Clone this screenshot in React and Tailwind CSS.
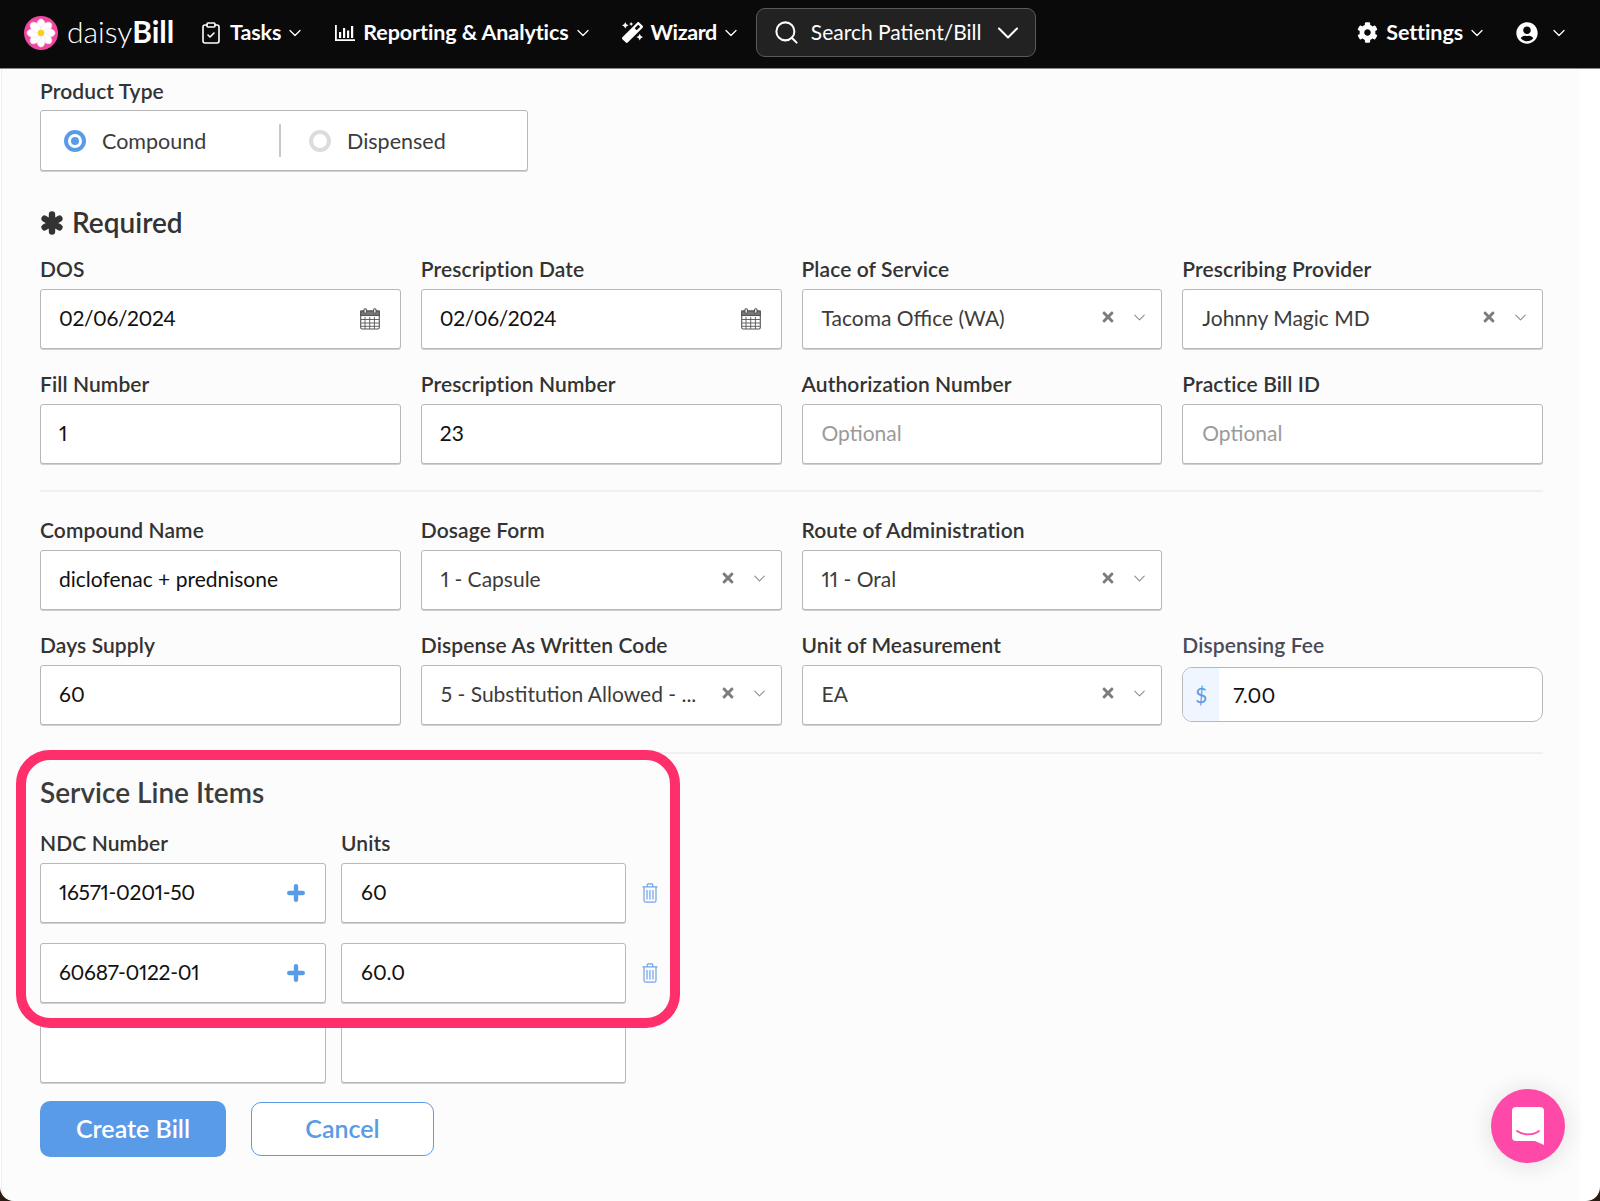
import React from "react";
import { ChevronDown, ClipboardCheck, Search } from "lucide-react";
import { FaCog, FaMagic, FaTimes, FaUserCircle } from "react-icons/fa";

function Logo() {
  const petals = [0, 45, 90, 135, 180, 225, 270, 315];
  return (
    <svg width="34" height="34" viewBox="0 0 34 34" className="shrink-0">
      <circle cx="17" cy="17" r="17" fill="#f0479f" />
      {petals.map((a) => (
        <ellipse key={a} cx="17" cy="9.5" rx="4.2" ry="6.6" fill="#ffffff" stroke="#fbd7e8" strokeWidth="0.6" transform={`rotate(${a} 17 17)`} />
      ))}
      <circle cx="17" cy="17" r="3.2" fill="#f7d21c" />
    </svg>
  );
}

function ChartIcon() {
  return (
    <svg width="20" height="18" viewBox="0 0 20 18" fill="#fff" className="shrink-0">
      <path d="M0 1h1.8v14.2H20V17H0z" />
      <rect x="4" y="8" width="2.2" height="6" />
      <rect x="8" y="4" width="2.2" height="10" />
      <rect x="12" y="6.5" width="2.2" height="7.5" />
      <rect x="16" y="2" width="2.2" height="12" />
    </svg>
  );
}

function CalendarIcon() {
  return (
    <svg width="20" height="22" viewBox="0 0 20 22" fill="none" stroke="#555" strokeWidth="1.1" className="shrink-0 mt-[2px]">
      <rect x="0.7" y="3" width="18.6" height="18" rx="1.5" />
      <rect x="0.7" y="3" width="18.6" height="4.5" fill="#777" />
      <path d="M5 9v12M9.7 9v12M14.4 9v12M1 11.5h18M1 15h18M1 18.3h18" strokeWidth="0.9" />
      <rect x="4" y="0.7" width="2.4" height="4.6" rx="1" fill="#fff" />
      <rect x="13.6" y="0.7" width="2.4" height="4.6" rx="1" fill="#fff" />
    </svg>
  );
}

function TrashIcon() {
  return (
    <svg width="16" height="20" viewBox="0 0 16 20" fill="none" stroke="#6ea3ea" strokeWidth="1.2" className="shrink-0">
      <path d="M0.5 3.8h15M5.2 3.6V1.9c0-.6.4-1 1-1h3.6c.6 0 1 .4 1 1v1.7" />
      <path d="M2 4v13.6c0 .9.6 1.5 1.5 1.5h9c.9 0 1.5-.6 1.5-1.5V4" />
      <path d="M5 7v9.5M8 7v9.5M11 7v9.5" />
    </svg>
  );
}

function PlusIcon() {
  return (
    <svg width="18" height="18" viewBox="0 0 18 18" stroke="#5a9be8" strokeWidth="4.4" strokeLinecap="round" className="shrink-0 mt-[2px]">
      <path d="M9 2.2v13.6M2.2 9h13.6" />
    </svg>
  );
}

function AsteriskIcon() {
  return (
    <svg width="24" height="24" viewBox="0 0 24 24" stroke="#333333" strokeWidth="6.4" strokeLinecap="round" className="shrink-0">
      <path d="M12 3.5v17M4.6 7.7l14.8 8.6M19.4 7.7L4.6 16.3" />
    </svg>
  );
}

function ChatIcon() {
  return (
    <svg width="32" height="38" viewBox="0 0 32 38" className="shrink-0">
      <path d="M4 0h24a4 4 0 0 1 4 4v34l-9-4H4a4 4 0 0 1-4-4V4a4 4 0 0 1 4-4z" fill="#fff" />
      <path d="M5 24c6 4.5 16 4.5 22 0" fill="none" stroke="#ff49a8" strokeWidth="1.8" strokeLinecap="round" />
    </svg>
  );
}

function NavItem({ icon, label, className = "", textClass = "tracking-[-0.1px]" }) {
  return (
    <div className={`flex items-center shrink-0 ${className}`}>
      {icon}
      <span className={`ml-[8px] pb-[1px] text-[21.5px] leading-[28px] font-bold text-white whitespace-nowrap ${textClass}`}>{label}</span>
      <ChevronDown size={20} strokeWidth={1.5} color="#fff" className="ml-[4px]" />
    </div>
  );
}

function Label({ children, className = "text-[#333333]" }) {
  return <div className={`h-[24px] mb-[8px] text-[21px] tracking-[0.1px] leading-[23px] font-semibold ${className}`}>{children}</div>;
}

function Box({ children, className = "" }) {
  return (
    <div className={`h-[60px] flex items-center bg-white border border-[#b8b8b8] rounded-[3px] shadow-[0_1px_0_#cfcfcf] px-[18px] pb-[2px] text-[21px] whitespace-nowrap ${className}`}>
      {children}
    </div>
  );
}

function TextField({ label, value, placeholder }) {
  return (
    <div>
      <Label>{label}</Label>
      <Box>
        {value ? <span className="text-[#111111]">{value}</span> : <span className="pl-[1px] text-[#9a9a9a]">{placeholder}</span>}
      </Box>
    </div>
  );
}

function DateField({ label, value }) {
  return (
    <div>
      <Label>{label}</Label>
      <Box className="justify-between !pr-[20px]">
        <span className="text-[#111111] tracking-[-0.4px]">{value}</span>
        <CalendarIcon />
      </Box>
    </div>
  );
}

function SelectField({ label, value }) {
  return (
    <div>
      <Label>{label}</Label>
      <Box className="!pr-[12px]">
        <span className="flex-1 pl-[1px] text-[#3c3c3c]">{value}</span>
        <FaTimes size={16} color="#7c7c7c" className="mb-[2px]" />
        <ChevronDown size={19} strokeWidth={1.3} color="#8a8a8a" className="ml-[14px] mb-[2px]" />
      </Box>
    </div>
  );
}

function Radio({ checked }) {
  return checked ? (
    <span className="w-[22px] h-[22px] rounded-full border-[4px] border-[#5a9be8] flex items-center justify-center shrink-0">
      <span className="w-[8px] h-[8px] rounded-full bg-[#5a9be8]" />
    </span>
  ) : (
    <span className="w-[22px] h-[22px] rounded-full border-[4px] border-[#dcdcdc] shrink-0" />
  );
}

function LineItem({ ndc, units }) {
  return (
    <div className="flex items-center">
      <Box className="w-[286px] justify-between !pr-[20px]">
        <span className="text-[#111111] tracking-[-0.3px]">{ndc}</span>
        <PlusIcon />
      </Box>
      <Box className="ml-[15px] w-[285px]">
        <span className="pl-[1px] text-[#111111]">{units}</span>
      </Box>
      <div className="ml-[16px]"><TrashIcon /></div>
    </div>
  );
}

export default function App() {
  return (
    <div className="relative w-[1600px] h-[1201px] overflow-hidden bg-[#2a1c12] font-[Lato,sans-serif] proportional-nums">
      <div className="w-full h-full bg-white rounded-b-[14px] overflow-hidden">
        <nav className="h-[69px] bg-[#0a0a0a] border-b border-[#8a8a8a] flex items-center pl-[24px] pr-[31px] pb-[3px]">
          <Logo />
          <div className="ml-[9px] mb-[3px] w-[107px] shrink-0 text-[30px] leading-[34px] text-white whitespace-nowrap">
            <span className="font-light">daisy</span>
            <span className="font-bold">Bill</span>
          </div>
          <NavItem className="ml-[25px]" icon={<ClipboardCheck size={24} strokeWidth={1.6} color="#fff" className="-mr-[1px]" />} label="Tasks" />
          <NavItem className="ml-[30px]" icon={<ChartIcon />} label="Reporting & Analytics" />
          <NavItem className="ml-[29px]" icon={<FaMagic size={21} color="#fff" />} label="Wizard" textClass="tracking-[-0.4px]" />
          <div className="ml-[15px] w-[280px] h-[49px] shrink-0 flex items-center bg-[#222222] border border-[#5a5a5a] rounded-[9px] pl-[16px]">
            <Search size={27} strokeWidth={1.8} color="#fff" />
            <span className="ml-[11px] pb-[2px] text-[21px] text-white whitespace-nowrap">Search Patient/Bill</span>
            <ChevronDown size={36} strokeWidth={1.4} color="#fff" className="ml-[8px]" />
          </div>
          <div className="ml-auto flex items-center">
            <NavItem icon={<FaCog size={21} color="#fff" />} label="Settings" />
            <FaUserCircle size={22} color="#fff" className="ml-[29px]" />
            <ChevronDown size={20} strokeWidth={1.5} color="#fff" className="ml-[11px]" />
          </div>
        </nav>
        <div className="ml-[1px] mr-[20px] h-[1132px] bg-[#fcfcfc] border-l border-[#eeeeee] pl-[38px] pt-[10px] rounded-bl-[14px]">
          <div className="w-[1503px]">
            <div className="h-[24px] mb-[7px] text-[21px] tracking-[0.1px] leading-[23px] font-semibold text-[#333333]">Product Type</div>
            <div className="w-[488px] h-[61px] flex items-center bg-white border border-[#b8b8b8] rounded-[3px] shadow-[0_1px_0_#cfcfcf] text-[21.5px] text-[#3c3c3c]">
              <div className="w-[238px] flex items-center pl-[23px]">
                <Radio checked />
                <span className="ml-[16px] pt-[2px]">Compound</span>
              </div>
              <div className="w-[2px] h-[33px] bg-[#c8c8c8]" />
              <div className="flex items-center pl-[28px]">
                <Radio />
                <span className="ml-[16px] pt-[2px]">Dispensed</span>
              </div>
            </div>
            <div className="mt-[36px] h-[32px] mb-[18px] flex items-center gap-[8px] text-[#333333]">
              <AsteriskIcon />
              <span className="text-[28px] leading-[30px] pb-[2px] font-semibold">Required</span>
            </div>
            <div className="grid grid-cols-4 gap-x-[20px] gap-y-[23px]">
              <DateField label="DOS" value="02/06/2024" />
              <DateField label="Prescription Date" value="02/06/2024" />
              <SelectField label="Place of Service" value="Tacoma Office (WA)" />
              <SelectField label="Prescribing Provider" value="Johnny Magic MD" />
              <TextField label="Fill Number" value="1" />
              <TextField label="Prescription Number" value="23" />
              <TextField label="Authorization Number" placeholder="Optional" />
              <TextField label="Practice Bill ID" placeholder="Optional" />
            </div>
            <div className="mt-[26px] mb-[26px] h-[2px] bg-[#f0f0f0]" />
            <div className="grid grid-cols-4 gap-x-[20px] gap-y-[23px]">
              <TextField label="Compound Name" value="diclofenac + prednisone" />
              <SelectField label="Dosage Form" value="1 - Capsule" />
              <SelectField label="Route of Administration" value="11 - Oral" />
              <div />
              <TextField label="Days Supply" value="60" />
              <SelectField label="Dispense As Written Code" value="5 - Substitution Allowed - ..." />
              <SelectField label="Unit of Measurement" value="EA" />
              <div>
                <Label className="text-[#4a4a5a]">Dispensing Fee</Label>
                <div className="mt-[10px] h-[55px] flex items-center bg-white border-[1.5px] border-[#b8b8b8] rounded-[10px] overflow-hidden text-[21px]">
                  <div className="w-[36px] h-full bg-[#eff6ff] flex items-center justify-center text-[#5a9be8]">$</div>
                  <span className="ml-[14px] text-[#111111]">7.00</span>
                </div>
              </div>
            </div>
            <div className="mt-[27px] h-[2px] bg-[#f0f0f0]" />
            <div className="mt-[22px] h-[32px] text-[28px] leading-[32px] font-semibold text-[#3c3c3c]">Service Line Items</div>
            <div className="mt-[23px] flex">
              <div className="w-[286px]"><Label>NDC Number</Label></div>
              <div className="ml-[15px] w-[285px]"><Label>Units</Label></div>
            </div>
            <div className="flex flex-col gap-[20px]">
              <LineItem ndc="16571-0201-50" units="60" />
              <LineItem ndc="60687-0122-01" units="60.0" />
              <div className="flex">
                <Box className="w-[286px]" />
                <Box className="ml-[15px] w-[285px]" />
              </div>
            </div>
            <div className="mt-[18px] flex items-center gap-[25px]">
              <div className="w-[186px] h-[56px] rounded-[10px] bg-[#5a9be8] flex items-center justify-center text-[25px] font-semibold text-white">Create Bill</div>
              <div className="w-[183px] h-[54px] rounded-[10px] bg-white border-[1.5px] border-[#5a9be8] flex items-center justify-center text-[25px] font-semibold text-[#5a9be8]">Cancel</div>
            </div>
          </div>
        </div>
      </div>
      <div className="absolute left-[16px] top-[750px] w-[664px] h-[278px] border-[10px] border-[#ff2f6b] rounded-[34px]" />
      <div className="absolute left-[1491px] top-[1089px] w-[74px] h-[74px] rounded-full bg-[#ff49a8] shadow-[0_2px_24px_rgba(0,0,0,0.12)] flex items-center justify-center">
        <ChatIcon />
      </div>
    </div>
  );
}
